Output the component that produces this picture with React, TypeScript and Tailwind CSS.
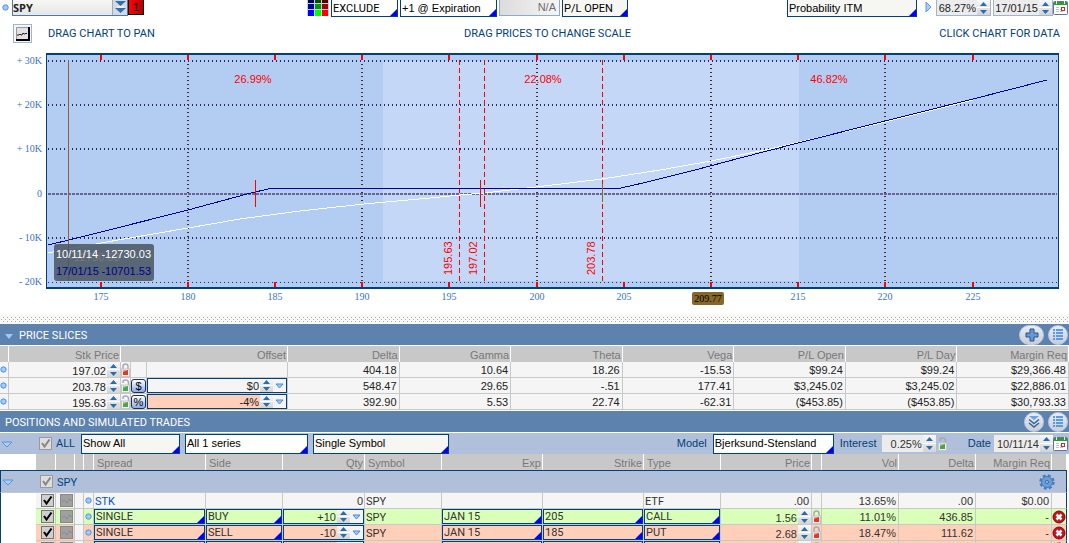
import { useState, type ReactNode } from 'react';
import clsx from 'clsx';

const CAPS = "font-[family-name:Roboto,'Liberation_Sans',sans-serif]";

function Corner() {
  return (
    <svg viewBox="0 0 8 8" className="pointer-events-none absolute right-0 bottom-0 size-[7px]" aria-hidden="true">
      <path d="M8 0V8H0Z" fill="#0000ff" />
    </svg>
  );
}

type PickProps = { label: string; value: string; className?: string; caps?: boolean };

function Pick({ label, value, className, caps }: PickProps) {
  return (
    <span className={clsx('relative block shrink-0 border border-[#00417d]', className)}>
      <select
        aria-label={label}
        defaultValue={value}
        className={clsx('block h-full w-full appearance-none pl-[1px] outline-none', caps && CAPS)}
      >
        <option>{value}</option>
      </select>
      <Corner />
    </span>
  );
}

function Spinner({ label }: { label: string }) {
  return (
    <span className="flex h-full w-[13px] shrink-0 flex-col bg-gradient-to-b from-[#f8f8f8] to-[#d4d4d4]">
      <button aria-label={`Increase ${label}`} className="flex min-h-0 flex-1 items-center justify-center">
        <svg viewBox="0 0 7 4" className="h-1 w-[7px]"><path d="M3.5 0L7 4H0Z" fill="#2b6ca8" /></svg>
      </button>
      <button aria-label={`Decrease ${label}`} className="flex min-h-0 flex-1 items-center justify-center border-t border-white">
        <svg viewBox="0 0 7 4" className="h-1 w-[7px]"><path d="M3.5 4L7 0H0Z" fill="#2b6ca8" /></svg>
      </button>
    </span>
  );
}

type NumberFieldProps = { label: string; value: string; className?: string; menu?: boolean };

function NumberField({ label, value, className, menu }: NumberFieldProps) {
  return (
    <span className={clsx('flex', className)}>
      <input
        aria-label={label}
        defaultValue={value}
        className="h-full w-0 min-w-0 flex-1 pr-[1px] text-right outline-none"
      />
      <Spinner label={label} />
      {menu && (
        <button aria-label={`${label} presets`} className="flex w-[13px] shrink-0 items-center justify-center bg-[#f4f4f4]">
          <svg viewBox="0 0 9 6" className="h-[6px] w-[9px]">
            <path d="M1 1H8L4.5 5Z" fill="#9cc8fa" stroke="#4f8ad2" />
          </svg>
        </button>
      )}
    </span>
  );
}

function Dot() {
  return (
    <svg viewBox="0 0 7 7" className="size-[7px] shrink-0" aria-hidden="true">
      <circle cx="3.5" cy="3.5" r="2.7" fill="#9ecbff" stroke="#5590d8" />
    </svg>
  );
}

function Lock({ open }: { open?: boolean }) {
  return (
    <button aria-label={open ? 'Lock value' : 'Unlock value'} className="flex shrink-0">
      <svg viewBox="0 0 9 14" className="h-[14px] w-[9px]">
        <path
          d={open ? 'M2 4V3Q2 1 4.500 1Q7 1 7.500 3V6' : 'M2 7V3.500Q2 1 4.500 1Q7 1 7 3.500V7'}
          fill="none"
          stroke="#a4aab6"
          strokeWidth="1.500"
        />
        <rect x="0.500" y="6" width="8" height="7.500" fill="#eeeeee" stroke="#c4c6cc" />
        <rect x="2" y="7" width="5" height="5" fill={open ? '#4ba647' : '#e03a22'} />
        <path d="M2 7H7L2 9Z" fill={open ? '#9bd394' : '#f79a82'} />
      </svg>
    </button>
  );
}

function CalendarButton() {
  return (
    <button aria-label="Open calendar" className="flex shrink-0">
      <svg viewBox="0 0 15 15" className="size-[15px]">
        <rect x="0.500" y="1.500" width="14" height="13" rx="1" fill="#ffffff" stroke="#66738f" />
        <path d="M1 2H14V5H1Z" fill="#2e9b38" />
        <path d="M3.500 1V4M11.500 1V4" stroke="#e4f4e4" />
        <path d="M3 7.500H6M3 9.500H6M3 11.500H6M7 11.500H10M7 9.500H8" stroke="#b9c0d8" />
        <rect x="8.500" y="7.500" width="3" height="3" fill="#ffffff" stroke="#dd2030" />
      </svg>
    </button>
  );
}

function Tick({ label, muted }: { label: string; muted?: boolean }) {
  const [checked, setChecked] = useState(true);
  return (
    <span className="relative block size-[13px] shrink-0">
      <input
        type="checkbox"
        aria-label={label}
        checked={checked}
        onChange={(e) => setChecked(e.target.checked)}
        className={clsx(
          'block size-[13px] appearance-none border',
          muted ? 'border-[#999999] bg-[#dedede]' : 'border-[#777777] bg-[#cfcfcf]',
        )}
      />
      {checked && (
        <svg viewBox="0 0 13 13" className="pointer-events-none absolute inset-0 size-[13px]" aria-hidden="true">
          <path d="M3 6L5.500 9.500L10.500 2.500" fill="none" stroke={muted ? '#868686' : '#000000'} strokeWidth="2" />
        </svg>
      )}
    </span>
  );
}

function Disclosure({ label }: { label: string }) {
  return (
    <button aria-label={label} className="flex shrink-0 pt-[2px]">
      <svg viewBox="0 0 12 7" className="h-[7px] w-3">
        <path d="M1 1H11L6 6Z" fill="#a8cffa" stroke="#5b93d6" />
      </svg>
    </button>
  );
}

function RoundButton({ label, wide, children }: { label: string; wide?: boolean; children: ReactNode }) {
  return (
    <button
      aria-label={label}
      className={clsx(
        'flex h-5 items-center justify-center rounded-full border border-[#bac8de] bg-gradient-to-b from-[#e8edf4] to-[#c6ced9]',
        wide ? 'w-[25px]' : 'w-[20px]',
      )}
    >
      {children}
    </button>
  );
}

function ListIcon() {
  return (
    <svg viewBox="0 0 12 12" className="size-3" shapeRendering="crispEdges">
      <path d="M1 1H3M1 4H3M1 7H3M1 10H3M4 1H11M4 4H11M4 7H11M4 10H11" stroke="#5b9ae8" strokeWidth="2" />
    </svg>
  );
}

function SectionBar({ title, collapsible, children }: { title: string; collapsible?: boolean; children: ReactNode }) {
  return (
    <header className="flex h-[21px] items-center bg-[#5d82ae] pr-[1px] pl-[5px] text-white">
      {collapsible && (
        <button aria-label={`Collapse ${title}`} className="mr-[6px] pt-1">
          <svg viewBox="0 0 8 5" className="h-[5px] w-2"><path d="M0 0H8L4 5Z" fill="#9bc9ff" /></svg>
        </button>
      )}
      <h2 className={clsx('pt-[2px]', CAPS)}>{title}</h2>
      <div className="ml-auto flex gap-1">{children}</div>
    </header>
  );
}

const PALETTE = ['#000055', '#005000', '#550000', '#0000a0', '#009a00', '#a80000', '#0000ff', '#00ff00', '#ff0000'];

function Toolbar() {
  return (
    <div className="flex h-[17px] items-start justify-between pr-[1px]">
      <div className="flex items-start pr-1 pl-[2px]">
        <span className="flex h-[15px] items-center"><Dot /></span>
        <span className="ml-[3px] flex h-4 w-[116px] border border-t-0 border-[#4a78b0] bg-gradient-to-b from-[#f7f7f4] to-[#e6e6e6]">
          <input
            aria-label="Symbol"
            defaultValue="SPY"
            className="w-0 flex-1 font-[family-name:'Open_Sans','DejaVu_Sans',sans-serif] font-bold text-[#222222] outline-none"
          />
          <button aria-label="Recent symbols" className="flex w-[15px] items-center justify-center border-l border-[#98acc8] bg-[#d5dae2]">
            <svg viewBox="0 0 11 13" className="h-[13px] w-[11px]">
              <path d="M0 0H11L5.500 5ZM0 7H11L5.500 12Z" fill="#336fa8" />
              <path d="M2 6H9" stroke="#ffffff" />
            </svg>
          </button>
        </span>
        <button className="h-[15px] w-4 border border-t-0 border-black bg-gradient-to-r from-[#ff0505] to-[#b50000] leading-[14px] text-black">1</button>
      </div>

      <div className="flex items-start">
        <button aria-label="Color palette" className="grid h-4 grid-cols-3 grid-rows-[3px_5px_6px] gap-[1px] bg-[#c5d0e0] px-[1px]">
          {PALETTE.map((color) => (
            <span key={color} className="w-[6px]" style={{ backgroundColor: color }} />
          ))}
        </button>
        <Pick label="Exclude" value="EXCLUDE" caps className="ml-[2px] h-[17px] w-[67px] border-t-0 bg-white text-black" />
        <Pick label="Expiration" value="+1 @ Expiration" className="ml-[2px] h-[17px] w-[97px] border-t-0 bg-white text-black" />
        <output className="ml-[2px] h-4 w-[61px] border border-t-0 border-[#8ea9ca] bg-gradient-to-r from-[#dcdcdc] to-[#f5f5f5] pr-[3px] text-right leading-[14px] text-[#6e6e6e]">
          N/A
        </output>
        <Pick label="Plot" value="P/L OPEN" caps className="ml-[2px] h-[17px] w-[66px] border-t-0 bg-[#f6f6f2] text-black" />
      </div>

      <div className="flex items-start">
        <Pick label="Probability mode" value="Probability ITM" className="h-[17px] w-[130px] border-t-0 bg-[#f6f6f2] text-black" />
        <button aria-label="Expand" className="ml-2 flex h-[14px] items-center">
          <svg viewBox="0 0 7 12" className="h-3 w-[7px]"><path d="M1 1V11L6 6Z" fill="#a5cdfa" stroke="#5f9be0" /></svg>
        </button>
        <NumberField label="Probability" value="68.27%" className="ml-1 h-4 w-[55px] border border-t-0 border-[#a0b4d0] bg-[#ececec]" />
        <NumberField label="Probability date" value="17/01/15" className="ml-[2px] h-4 w-[60px] border border-t-0 border-[#a0b4d0] bg-[#ececec]" />
        <CalendarButton />
      </div>
    </div>
  );
}

function ChartHints() {
  return (
    <div className={clsx('flex items-center pt-[7px] pr-[9px] pl-[13px] text-[#00417d]', CAPS)}>
      <button aria-label="Chart view" className="flex size-[19px] shrink-0 items-center justify-center border border-[#9db4d4] bg-[#f6f6f4]">
        <svg viewBox="0 0 14 14" className="size-[14px]">
          <rect width="14" height="14" fill="#e2e2e2" />
          <path d="M0.500 13.500V0.500H13.500" fill="none" stroke="#9a9a9a" />
          <path d="M0 13H13V0" fill="none" stroke="#000000" strokeWidth="2" />
          <path d="M1 8H3L4 7L5 8H6L7 6L8 7H9L10 6L11 7" fill="none" stroke="#222222" />
        </svg>
      </button>
      <div className="grid flex-1 grid-cols-[1fr_auto_1fr] pl-[3px]">
        <span className="pl-[13px]">DRAG CHART TO PAN</span>
        <span>DRAG PRICES TO CHANGE SCALE</span>
        <span className="text-right">CLICK CHART FOR DATA</span>
      </div>
    </div>
  );
}

const Y_AXIS = [
  { y: 61, label: '+ 30K' },
  { y: 105, label: '+ 20K' },
  { y: 149, label: '+ 10K' },
  { y: 194, label: '0' },
  { y: 238, label: '- 10K' },
  { y: 282, label: '- 20K' },
];

const X_AXIS = [
  { x: 101, label: '175' },
  { x: 188, label: '180' },
  { x: 275, label: '185' },
  { x: 362, label: '190' },
  { x: 449, label: '195' },
  { x: 537, label: '200' },
  { x: 624, label: '205' },
  { x: 711, label: '' },
  { x: 798, label: '215' },
  { x: 885, label: '220' },
  { x: 973, label: '225' },
];

const SLICES = [
  { x: 459.5, label: '195.63' },
  { x: 484.5, label: '197.02' },
  { x: 602.5, label: '203.78' },
];

const PROBABILITIES = [
  { x: 253, label: '26.99%' },
  { x: 543, label: '22.08%' },
  { x: 829, label: '46.82%' },
];

function RiskChart() {
  return (
    <svg viewBox="0 50 1069 258" className="mt-[7px] block w-full" role="img" aria-label="Risk profile">
      <g shapeRendering="crispEdges">
        <rect x="46" y="53" width="1013" height="236" fill="#b2ccf2" />
        <rect x="383" y="61" width="416" height="220" fill="#c5d7f6" />
        {Y_AXIS.map(({ y, label }) =>
          label === '0' ? (
            <path key={y} d={`M48 ${y}H1057`} stroke="#6a6496" strokeWidth="2" strokeDasharray="3 1" />
          ) : (
            <path key={y} d={`M48 ${y}H1057`} stroke="#2c2a5c" strokeWidth={y === 282 ? 1 : 2} strokeDasharray="1 3" />
          ),
        )}
        {X_AXIS.filter((_, i) => i % 2 === 1).map(({ x }) => (
          <path key={x} d={`M${x} 64V281`} stroke="#4a2b2b" strokeWidth="2" strokeDasharray="1 3" />
        ))}
        {X_AXIS.map(({ x }) => (
          <path key={x} d={`M${x} 55V60M${x} 282V287`} stroke="#ff0000" strokeWidth="2" />
        ))}
        <path d="M46 54H1059M46 288H1059" stroke="#00417d" strokeWidth="2" />
        <path d="M46.500 53V289M1058.500 53V289" stroke="#00417d" />
        <polyline
          points="48,253 101,243 188,228 240,219 300,211 364,204 430,198 460,195 484,193 536,187 602,179 660,170 711,161 770,149 800,142 885,122 973,100"
          fill="none"
          stroke="#ffffff"
        />
        {SLICES.map(({ x }) => (
          <path key={x} d={`M${x} 60V281`} stroke="#ff0000" strokeDasharray="5 3" />
        ))}
        <polyline
          points="48,245 69,240 101,232 188,210 247,194 272,188 621,188 643,183 695,170 740,158 798,143 885,121 973,99 1047,80"
          fill="none"
          stroke="#000090"
        />
        <path d="M255.500 180V207M480.500 180V207" stroke="#ff0000" />
        <path d="M602.500 184V202" stroke="#8a6a28" />
        <path d="M68.500 60V281" stroke="#94594a" />
      </g>

      <g fill="#3a72c4" className="font-[family-name:'Liberation_Serif',serif] text-[10px]">
        {Y_AXIS.map(({ y, label }) => (
          <text key={y} x="42" y={y + 3} textAnchor="end">{label}</text>
        ))}
        {X_AXIS.map(({ x, label }) => (
          <text key={x} x={x} y="300" textAnchor="middle">{label}</text>
        ))}
      </g>
      <rect x="692" y="292" width="32" height="13" rx="2" fill="#86682a" />
      <text x="708" y="302" textAnchor="middle" fill="#000000" className="font-[family-name:'Liberation_Serif',serif] text-[10px]">
        209.77
      </text>

      <g fill="#ff0000">
        {PROBABILITIES.map(({ x, label }) => (
          <text key={x} x={x} y="83" textAnchor="middle">{label}</text>
        ))}
        {SLICES.map(({ x, label }) => (
          <text key={x} transform={`translate(${x - 7.5} 275) rotate(-90)`}>{label}</text>
        ))}
      </g>

      <rect x="54" y="244" width="100" height="37" rx="3" fill="#4b5663" fillOpacity="0.87" />
      <text x="70" y="261" fill="#787a7c">-12730.03</text>
      <text x="56" y="258" fill="#ffffff">10/11/14</text>
      <text x="151" y="258" fill="#ffffff" textAnchor="end">-12730.03</text>
      <text x="56" y="275" fill="#000090">17/01/15</text>
      <text x="151" y="275" fill="#000090" textAnchor="end">-10701.53</text>
    </svg>
  );
}

function Splitter() {
  return (
    <svg className="mt-[6px] block h-[10px] w-full" aria-hidden="true">
      <defs>
        <pattern id="grip" width="4" height="4" patternUnits="userSpaceOnUse">
          <rect width="4" height="4" fill="#f8f8f4" />
          <rect x="1" y="1" width="1" height="1" fill="#aaaaaa" />
          <rect x="3" y="3" width="1" height="1" fill="#aaaaaa" />
        </pattern>
      </defs>
      <rect width="100%" height="100%" fill="#f8f8f4" />
      <rect y="2" width="100%" height="7" fill="url(#grip)" />
    </svg>
  );
}

const SLICE_COLUMNS = ['Delta', 'Gamma', 'Theta', 'Vega', 'P/L Open', 'P/L Day', 'Margin Req'];

const SLICE_ROWS = [
  { price: '197.02', values: ['404.18', '10.64', '18.26', '-15.53', '$99.24', '$99.24', '$29,366.48'] },
  { price: '203.78', unit: '$', offset: '$0', values: ['548.47', '29.65', '-.51', '177.41', '$3,245.02', '$3,245.02', '$22,886.01'] },
  { price: '195.63', unit: '%', offset: '-4%', values: ['392.90', '5.53', '22.74', '-62.31', '($453.85)', '($453.85)', '$30,793.33'] },
];

const HEAD_CELL = 'h-4 border-r border-white p-0 pt-[2px] pr-[1px] font-normal';
const CELL = 'border-r border-b border-[#c8c8c8] p-0';
const TEXT_CELL = 'border-r border-b border-[#c8c8c8] p-0 pt-[2px] leading-[13px]';

function PriceSlices() {
  return (
    <section>
      <SectionBar title="PRICE SLICES" collapsible>
        <RoundButton label="Add slice" wide>
          <svg viewBox="0 0 14 14" className="size-[14px]">
            <path d="M5 1H9V5H13V9H9V13H5V9H1V5H5Z" fill="#6098d8" stroke="#2c5484" />
          </svg>
        </RoundButton>
        <RoundButton label="Slice menu"><ListIcon /></RoundButton>
      </SectionBar>
      <table className="mt-[1px] w-full table-fixed border-separate border-spacing-0 bg-[#f5f5f5]">
        <colgroup>
          <col className="w-[9px]" />
          <col className="w-[112px]" />
          <col className="w-[10px]" />
          <col className="w-4" />
          <col className="w-[141px]" />
          {SLICE_COLUMNS.map((name) => <col key={name} />)}
        </colgroup>
        <thead>
          <tr className="bg-[#c8c8c8] text-right leading-[14px] text-[#787878]">
            <td className={HEAD_CELL} />
            <th className={HEAD_CELL}>Stk Price</th>
            <th colSpan={3} className={HEAD_CELL}>Offset</th>
            {SLICE_COLUMNS.map((name) => <th key={name} className={HEAD_CELL}>{name}</th>)}
          </tr>
        </thead>
        <tbody>
          {SLICE_ROWS.map((row) => (
            <tr key={row.price}>
              <td className={CELL}><Dot /></td>
              <td className={CELL}>
                <NumberField label={`Stock price ${row.price}`} value={row.price} className="h-[15px] [&>input]:pt-[2px]" />
              </td>
              <td className={CELL}>
                <div className="flex h-[15px] items-center"><Lock open={Boolean(row.unit)} /></div>
              </td>
              <td className={CELL}>
                {row.unit && (
                  <button className="block h-[14px] w-[15px] rounded-[3px] border border-[#20304c] bg-gradient-to-b from-white to-[#8fa9e8] text-center leading-[12px] text-black">
                    {row.unit}
                  </button>
                )}
              </td>
              <td className={CELL}>
                {row.offset && (
                  <NumberField
                    label={`Offset ${row.price}`}
                    value={row.offset}
                    menu
                    className={clsx('h-[15px] border border-[#00417d]', row.unit === '%' ? 'bg-[#ffcfba]' : 'bg-[#f5f5f5]')}
                  />
                )}
              </td>
              {row.values.map((value, i) => (
                <td key={i} className={clsx(TEXT_CELL, 'pr-[2px] text-right')}>{value}</td>
              ))}
            </tr>
          ))}
        </tbody>
      </table>
    </section>
  );
}

function FilterBar() {
  return (
    <div className="mt-[1px] flex h-[21px] items-center bg-[#b0bfda] pr-[1px] pl-[1px] text-[#00417d]">
      <Disclosure label="Collapse all" />
      <span className="ml-[26px]"><Tick label="All" muted /></span>
      <span className={clsx('ml-1 w-[25px]', CAPS)}>ALL</span>
      <Pick label="Show" value="Show All" className="h-5 w-[99px] bg-[#f6f6f2] text-black" />
      <Pick label="Series" value="All 1 series" className="ml-[5px] h-5 w-[123px] bg-white text-black" />
      <Pick label="Symbols" value="Single Symbol" className="ml-[5px] h-5 w-[136px] bg-[#f6f6f2] text-black" />
      <span className="ml-auto">Model</span>
      <Pick label="Model" value="Bjerksund-Stensland" className="ml-[6px] h-5 w-[121px] bg-white text-black" />
      <span className="ml-[6px] w-[42px]">Interest</span>
      <NumberField label="Interest" value="0.25%" className="h-[17px] w-[54px] bg-[#ececec] text-[#333333]" />
      <span className="ml-[2px]"><Lock open /></span>
      <span className="ml-[21px]">Date</span>
      <NumberField label="Date" value="10/11/14" className="ml-[3px] h-[17px] w-[59px] bg-[#ececec] text-[#333333]" />
      <CalendarButton />
    </div>
  );
}

type Position = {
  kind: 'stock' | 'buy' | 'sell';
  spread: string;
  side: string;
  qty: string;
  symbol: string;
  exp: string;
  strike: string;
  type: string;
  price: string;
  vol: string;
  delta: string;
  margin: string;
};

const POSITIONS: Position[] = [
  { kind: 'stock', spread: 'STK', side: '', qty: '0', symbol: 'SPY', exp: '', strike: '', type: 'ETF', price: '.00', vol: '13.65%', delta: '.00', margin: '$0.00' },
  { kind: 'buy', spread: 'SINGLE', side: 'BUY', qty: '+10', symbol: 'SPY', exp: 'JAN 15', strike: '205', type: 'CALL', price: '1.56', vol: '11.01%', delta: '436.85', margin: '-' },
  { kind: 'sell', spread: 'SINGLE', side: 'SELL', qty: '-10', symbol: 'SPY', exp: 'JAN 15', strike: '185', type: 'PUT', price: '2.68', vol: '18.47%', delta: '111.62', margin: '-' },
  { kind: 'sell', spread: '', side: '', qty: '', symbol: '', exp: '', strike: '', type: '', price: '', vol: '', delta: '', margin: '' },
];

const ROW_TINT = { stock: 'bg-[#f5f5f5]', buy: 'bg-[#d9ffb8]', sell: 'bg-[#ffcfba]' };

function PositionRow({ row }: { row: Position }) {
  const tint = ROW_TINT[row.kind];
  const editable = row.kind !== 'stock';
  const field = (label: string, value: string) =>
    editable ? (
      <Pick label={label} value={value} caps className="h-[15px]" />
    ) : (
      <span className={clsx('block h-[15px] pt-[2px] pl-[1px]', CAPS)}>{value}</span>
    );

  return (
    <tr className={clsx(tint, 'leading-[13px] text-[#333333]')}>
      <td className="border-l border-[#00417d] bg-white p-0" />
      <td className={CELL}><div className="flex justify-center pl-1"><Tick label={`Include ${row.spread}`} /></div></td>
      <td className={CELL}>
        <button aria-label="Plot position" className="ml-1 flex size-[13px] items-center justify-center border border-[#888888] bg-[#a0a0a0]">
          <svg viewBox="0 0 10 10" className="size-[10px]"><path d="M0 6L2 4L5 7L7 3L10 5" fill="none" stroke="#8a8a8a" /></svg>
        </button>
      </td>
      <td className={clsx(CELL, 'bg-[#f5f5f5]')} />
      <td className={CELL}><div className="flex justify-center"><Dot /></div></td>
      <td className={clsx(CELL, !editable && 'text-[#0050d8]')}>{field('Spread', row.spread)}</td>
      <td className={CELL}>{field('Side', row.side)}</td>
      <td className={CELL}>
        {editable ? (
          <NumberField label="Quantity" value={row.qty} menu className="h-[15px] border border-[#00417d]" />
        ) : (
          <span className="block pt-[2px] pr-[1px] text-right">{row.qty}</span>
        )}
      </td>
      <td className={clsx(TEXT_CELL, 'pl-[1px]', CAPS)}>{row.symbol}</td>
      <td className={CELL}>{field('Expiration', row.exp)}</td>
      <td className={CELL}>{field('Strike', row.strike)}</td>
      <td className={CELL}>{field('Type', row.type)}</td>
      <td className={CELL}>
        {editable ? (
          <NumberField label="Price" value={row.price} className="h-[15px] [&>input]:pt-[2px]" />
        ) : (
          <span className="block pt-[2px] pr-[2px] text-right">{row.price}</span>
        )}
      </td>
      <td className={CELL}>{editable && <div className="flex h-[15px] items-center"><Lock /></div>}</td>
      <td className={clsx(TEXT_CELL, 'pr-[2px] text-right')}>{row.vol}</td>
      <td className={clsx(TEXT_CELL, 'pr-[2px] text-right')}>{row.delta}</td>
      <td className={clsx(TEXT_CELL, 'pr-[2px] text-right')}>{row.margin}</td>
      <td className="border-r border-b border-r-[#00417d] border-b-[#c8c8c8] p-0">
        {editable && (
          <button aria-label="Remove position" className="flex h-[15px] items-center">
            <svg viewBox="0 0 14 14" className="size-[14px]">
              <circle cx="7" cy="7" r="6" fill="#c8101c" stroke="#7e0a10" />
              <path d="M4.500 4.500L9.500 9.500M9.500 4.500L4.500 9.500" stroke="#ffffff" strokeWidth="2.500" />
            </svg>
          </button>
        )}
      </td>
    </tr>
  );
}

function Positions() {
  return (
    <section className="mt-[1px]">
      <SectionBar title="POSITIONS AND SIMULATED TRADES">
        <RoundButton label="Expand all">
          <svg viewBox="0 0 12 12" className="size-3">
            <path d="M1 0H11L6 4Z" fill="#6ba4ea" />
            <path d="M1 3.500L6 7.500L11 3.500M1 7L6 11L11 7" fill="none" stroke="#3a6498" strokeWidth="1.500" />
          </svg>
        </RoundButton>
        <RoundButton label="Positions menu"><ListIcon /></RoundButton>
      </SectionBar>
      <FilterBar />
      <div className="pr-[2px]">
        <table className="w-full table-fixed border-separate border-spacing-0">
          <colgroup>
            <col className="w-[36px]" />
            <col className="w-[20px]" />
            <col className="w-[19px]" />
            <col className="w-[9px]" />
            <col className="w-[10px]" />
            <col className="w-[112px]" />
            <col className="w-[77px]" />
            <col className="w-[82px]" />
            <col className="w-[77px]" />
            <col className="w-[101px]" />
            <col className="w-[101px]" />
            <col className="w-[77px]" />
            <col className="w-[91px]" />
            <col className="w-[10px]" />
            <col className="w-[77px]" />
            <col className="w-[77px]" />
            <col className="w-[76px]" />
            <col className="w-[15px]" />
          </colgroup>
          <thead>
            <tr className="bg-[#c8c8c8] text-right leading-[14px] text-[#787878]">
              <td className="bg-white" />
              <td className={HEAD_CELL} />
              <td className={HEAD_CELL} />
              <td className={HEAD_CELL} />
              <td className={HEAD_CELL} />
              <th className={clsx(HEAD_CELL, 'pl-[3px] text-left')}>Spread</th>
              <th className={clsx(HEAD_CELL, 'pl-[3px] text-left')}>Side</th>
              <th className={HEAD_CELL}>Qty</th>
              <th className={clsx(HEAD_CELL, 'pl-[3px] text-left')}>Symbol</th>
              <th className={HEAD_CELL}>Exp</th>
              <th className={HEAD_CELL}>Strike</th>
              <th className={clsx(HEAD_CELL, 'pl-[3px] text-left')}>Type</th>
              <th className={HEAD_CELL}>Price</th>
              <td className={HEAD_CELL} />
              <th className={HEAD_CELL}>Vol</th>
              <th className={HEAD_CELL}>Delta</th>
              <th className={HEAD_CELL}>Margin Req</th>
              <td className={HEAD_CELL} />
            </tr>
          </thead>
          <tbody>
            <tr>
              <td colSpan={18} className="border border-[#00417d] border-b-[#c8c8c8] bg-[#b0bfda] p-0">
                <div className="flex h-[21px] items-center pr-[11px] pl-[1px] text-[#00417d]">
                  <Disclosure label="Collapse SPY" />
                  <span className="ml-[26px]"><Tick label="SPY" muted /></span>
                  <span className={clsx('ml-1 pt-[1px]', CAPS)}>SPY</span>
                  <button aria-label="Group settings" className="ml-auto">
                    <svg viewBox="0 0 16 16" className="size-4">
                      <circle cx="8" cy="8" r="6.200" fill="none" stroke="#4a7cba" strokeWidth="3" strokeDasharray="2.800 2.069" />
                      <circle cx="8" cy="8" r="5.500" fill="#6a9ddb" stroke="#4a7cba" />
                      <circle cx="8" cy="8" r="1.500" fill="#b0cdf0" stroke="#3a659c" />
                    </svg>
                  </button>
                </div>
              </td>
            </tr>
            {POSITIONS.map((row, i) => <PositionRow key={i} row={row} />)}
          </tbody>
        </table>
      </div>
    </section>
  );
}

export default function App() {
  return (
    <main className="h-screen overflow-hidden bg-white font-[family-name:'Liberation_Sans',Arial,sans-serif] text-[11px] leading-[13px] text-[#222222]">
      <Toolbar />
      <ChartHints />
      <RiskChart />
      <Splitter />
      <PriceSlices />
      <Positions />
    </main>
  );
}
